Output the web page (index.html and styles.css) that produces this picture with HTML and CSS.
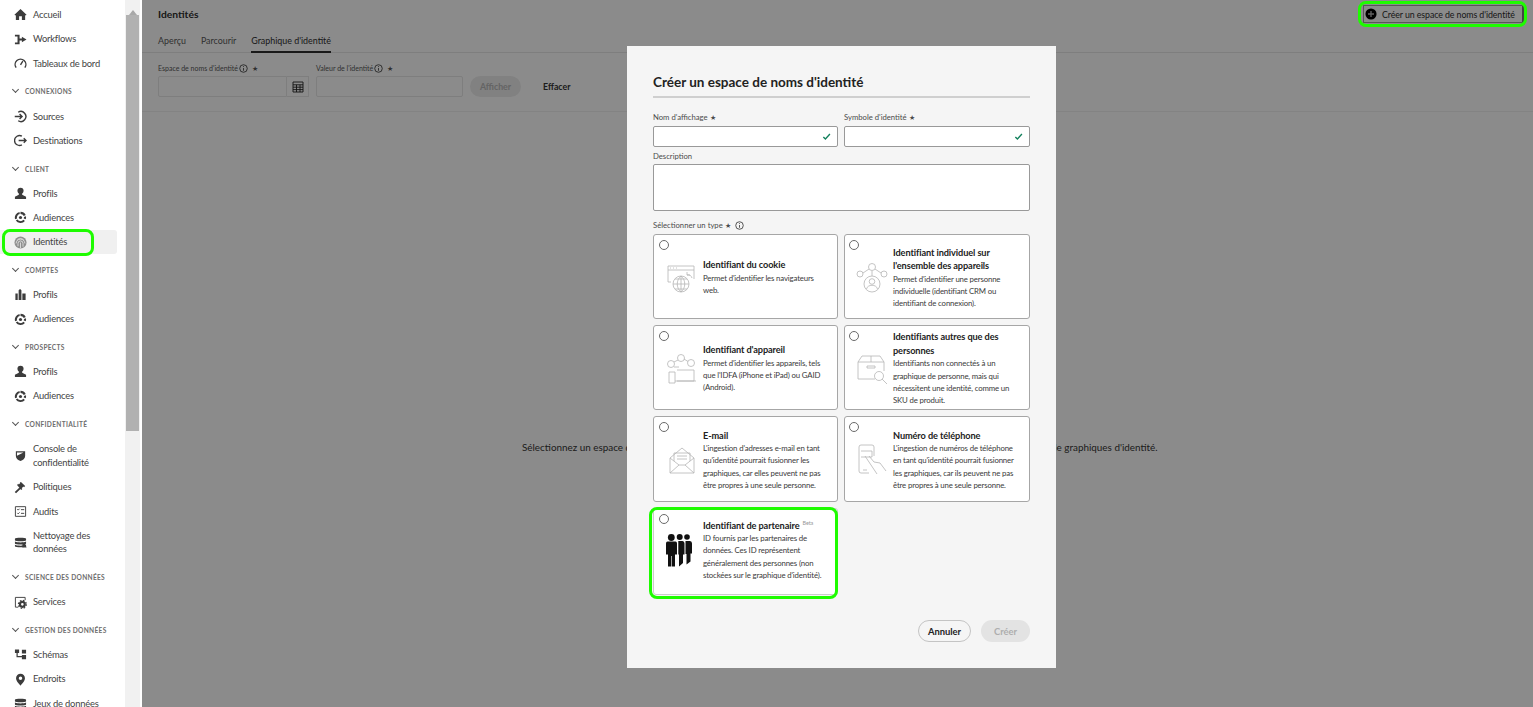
FILE: index.html
```html
<!DOCTYPE html>
<html lang="fr">
<head>
    <meta charset="UTF-8">
    <title>Identités</title>
    <link rel="stylesheet" href="styles.css">
</head>
<body>
    <svg class="defs" width="0" height="0">
        <symbol id="i-profile" viewBox="0 0 14 14"><circle cx="7" cy="4" r="3.3"/><path d="M5.2 6.500h3.600v1.900l4.200 2v2.600H1v-2.600l4.200-2z"/></symbol>
        <symbol id="i-audience" viewBox="0 0 14 14"><path d="M7 .8a6.200 6.200 0 0 1 5.600 3.500l-2.100 1A3.900 3.900 0 0 0 7 3.100zM5.900 1A6.200 6.200 0 0 0 1.200 9l2.100-.9a3.900 3.900 0 0 1 2.900-4.900zM1.900 10.200a6.200 6.200 0 0 0 9.900.7l-1.700-1.500a3.900 3.900 0 0 1-6.300-.2zM12.900 5.600a6.200 6.200 0 0 1-.3 3.300l-2.100-.9c.2-.6.2-1 .2-1.600z"/><circle cx="7" cy="7" r="1.700"/></symbol>
        <symbol id="i-db" viewBox="0 0 14 14"><path d="M1 3c0-1.400 12-1.400 12 0v1.500c0 1.400-12 1.400-12 0zM1 6c3 1.300 9 1.300 12 0v2c0 1.400-12 1.400-12 0zM1 9.500c3 1.300 9 1.300 12 0V11c0 1.400-12 1.400-12 0z"/></symbol>
    </svg>

    <aside class="sidebar">
        <nav class="nav">
            <a class="nav-item"><svg viewBox="0 0 14 14"><path d="M7 1l6.500 6.200-.9.9L12 7.600V13H8.500V9h-3v4H2V7.600l-.6.500-.9-.9z"/></svg>Accueil</a>
            <a class="nav-item"><svg viewBox="0 0 14 14"><path d="M1 2h5v3.800h2.500V4L13.500 7l-5 3V8.200H6V12H1v-1.800h2.800V3.800H1z"/></svg>Workflows</a>
            <a class="nav-item"><svg viewBox="0 0 14 14"><path class="line" d="M2.300 11.500a5.800 5.800 0 1 1 9.400 0M7 8.500l2.500-4"/></svg>Tableaux de bord</a>

            <h3 class="nav-head"><span class="chev"></span>Connexions</h3>
            <a class="nav-item"><svg viewBox="0 0 14 14"><path class="line" d="M4.500 2.400a5.400 5.400 0 1 1 0 9.200M.8 7h7.500M6 4.300L8.700 7 6 9.700"/></svg>Sources</a>
            <a class="nav-item"><svg viewBox="0 0 14 14"><path class="line" d="M8.500 2.400a5.300 5.300 0 1 0 0 9.200M5 7h8M10.500 4.500L13 7l-2.500 2.500"/></svg>Destinations</a>

            <h3 class="nav-head"><span class="chev"></span>Client</h3>
            <a class="nav-item"><svg viewBox="0 0 14 14"><use href="#i-profile"/></svg>Profils</a>
            <a class="nav-item"><svg viewBox="0 0 14 14"><use href="#i-audience"/></svg>Audiences</a>
            <a class="nav-item is-active"><svg class="finger" viewBox="0 0 14 14"><circle cx="7" cy="7" r="6.500" fill="#8f8f8f"/><path class="line thin" d="M3 5a4.800 4.800 0 0 1 8 0M2.300 8a4.700 4.700 0 0 1 9.400 0M4.300 11V8a2.700 2.700 0 0 1 5.400 0v3.500M7 7v6"/></svg>Identités</a>

            <h3 class="nav-head"><span class="chev"></span>Comptes</h3>
            <a class="nav-item"><svg viewBox="0 0 14 14"><path d="M1.500 6H4v7H1.500zM5 2.500l1.500-1.500L8 2.500V13H5zM9 6h3.500v7H9z"/></svg>Profils</a>
            <a class="nav-item"><svg viewBox="0 0 14 14"><use href="#i-audience"/></svg>Audiences</a>

            <h3 class="nav-head"><span class="chev"></span>Prospects</h3>
            <a class="nav-item"><svg viewBox="0 0 14 14"><use href="#i-profile"/></svg>Profils</a>
            <a class="nav-item"><svg viewBox="0 0 14 14"><use href="#i-audience"/></svg>Audiences</a>

            <h3 class="nav-head"><span class="chev"></span>Confidentialité</h3>
            <a class="nav-item is-double"><svg viewBox="0 0 14 14"><path fill-rule="evenodd" d="M2 2.500h10v5c0 3-2.500 4.500-5 5.500-2.500-1-5-2.500-5-5.500zM3.200 3.700v3.700l7-3.700z"/></svg><span>Console de<br>confidentialité</span></a>
            <a class="nav-item"><svg viewBox="0 0 14 14"><path d="M7.500 1l4.500 4.500-1.200 1.200-.7-.7-1.800 1.800.7.7-1.200 1.200L3.300 4.200l1.200-1.200.7.700 1.800-1.800-.7-.7zM5.600 7.200L7 8.600l-4.800 4.600-1.400-1.400z"/></svg>Politiques</a>
            <a class="nav-item"><svg viewBox="0 0 14 14"><path class="line thin" d="M1.500 1.800h11v10.400h-11zM3.500 4.500l1 1 1.500-1.500M3.500 8.500l1 1 1.500-1.500M7.500 5h3.500M7.500 9h3.500"/></svg>Audits</a>
            <a class="nav-item is-double"><svg viewBox="0 0 14 14"><use href="#i-db"/><path d="M9 9l3-1 1.500 4.500H9z"/></svg><span>Nettoyage des<br>données</span></a>

            <h3 class="nav-head"><span class="chev"></span>Science des données</h3>
            <a class="nav-item"><svg viewBox="0 0 14 14"><path class="line thin" d="M4.500 12H1.500V1.500H12V4.500"/><circle cx="9" cy="9" r="2.600" fill="none" stroke="#3c3c3c" stroke-width="2.400"/><circle cx="9" cy="9" r="4.300" fill="none" stroke="#3c3c3c" stroke-width="1.200" stroke-dasharray="1.700 1.700"/></svg>Services</a>

            <h3 class="nav-head"><span class="chev"></span>Gestion des données</h3>
            <a class="nav-item"><svg viewBox="0 0 14 14"><path d="M1 1.500h4.500v4H4v3h4.500v-1H13v4.500H8.500v-2H2.700V5.500H1zM8.500 2H13v4H8.500z"/></svg>Schémas</a>
            <a class="nav-item"><svg viewBox="0 0 14 14"><path fill-rule="evenodd" d="M7 .8a4.800 4.800 0 0 1 4.800 4.800C11.800 8.800 7 13.500 7 13.500S2.200 8.800 2.200 5.600A4.800 4.800 0 0 1 7 .8zm0 3a1.900 1.900 0 1 0 0 3.800 1.900 1.900 0 0 0 0-3.800z"/></svg>Endroits</a>
            <a class="nav-item"><svg viewBox="0 0 14 14"><use href="#i-db"/></svg>Jeux de données</a>
        </nav>
    </aside>

    <div class="scrollbar">
        <span class="scroll-arrow"></span>
        <div class="scroll-thumb"></div>
    </div>

    <main class="main">
        <header class="top">
            <div class="top-row">
                <h1>Identités</h1>
                <button class="create-btn" type="button">
                    <svg viewBox="0 0 14 14"><circle cx="7" cy="7" r="6.500"/><path d="M7 3.500v7M3.500 7h7" stroke="#aaa" stroke-width="1.600"/></svg>
                    Créer un espace de noms d'identité
                </button>
            </div>
            <div class="tabs">
                <a>Aperçu</a>
                <a>Parcourir</a>
                <a class="tab-on">Graphique d'identité</a>
            </div>
        </header>

        <section class="filters">
            <div class="field field-ns">
                <label>Espace de noms d'identité<svg class="info" viewBox="0 0 10 10"><circle cx="5" cy="5" r="4.200"/><path d="M5 4.500v3M5 2.400v1"/></svg><i>★</i></label>
                <div class="ns-box">
                    <span class="ns-input"></span>
                    <span class="ns-btn"><svg viewBox="0 0 12 12"><path d="M1 1h10v10H1zM1 3.800h10M1 6.200h10M1 8.600h10M4.500 3.800V11M8 3.800V11"/></svg></span>
                </div>
            </div>
            <div class="field field-val">
                <label>Valeur de l'identité<svg class="info" viewBox="0 0 10 10"><circle cx="5" cy="5" r="4.200"/><path d="M5 4.500v3M5 2.400v1"/></svg><i>★</i></label>
                <span class="val-input"></span>
            </div>
            <button class="show-btn" type="button">Afficher</button>
            <button class="clear-btn" type="button">Effacer</button>
        </section>

        <p class="empty">Sélectionnez un espace de noms d'identité et saisissez une valeur d'identité pour commencer à afficher toutes les données de graphiques d'identité.</p>

        <div class="scrim">
            <span class="ring-create"></span>
            <div class="modal">
                <h2>Créer un espace de noms d'identité</h2>
                <div class="form-two">
                    <div>
                        <label>Nom d'affichage <i>★</i></label>
                        <div class="input"><svg viewBox="0 0 10 10"><path d="M1.500 5.500l2.300 2.300 5-5.500"/></svg></div>
                    </div>
                    <div>
                        <label>Symbole d'identité <i>★</i></label>
                        <div class="input"><svg viewBox="0 0 10 10"><path d="M1.500 5.500l2.300 2.300 5-5.500"/></svg></div>
                    </div>
                </div>
                <label class="label-desc">Description</label>
                <div class="textarea"></div>
                <label class="label-type">Sélectionner un type <i>★</i><svg class="info" viewBox="0 0 10 10"><circle cx="5" cy="5" r="4.200"/><path d="M5 4.500v3M5 2.400v1"/></svg></label>

                <div class="cards">
                    <div class="card">
                        <span class="radio"></span>
                        <svg class="card-icon" viewBox="0 0 32 32"><path d="M5 20H2V4h26v13M2 8h26M4 6h1M7 6h1M10 6h1M21 13a4 4 0 0 1 5 3M21 10v3h3"/><circle cx="15" cy="22" r="8"/><path d="M7 22h16M15 14v16M9 17h12M9 27h12M15 14c-5 4-5 12 0 16M15 14c5 4 5 12 0 16"/></svg>
                        <div class="card-text"><h4>Identifiant du cookie</h4><p>Permet d'identifier les navigateurs<br>web.</p></div>
                    </div>
                    <div class="card card-b">
                        <span class="radio"></span>
                        <svg class="card-icon" viewBox="0 0 32 32"><circle cx="16" cy="5" r="3.500"/><circle cx="4" cy="12" r="3"/><circle cx="28" cy="12" r="3"/><path d="M7 11l6-4M19 7l6 4M16 9v5"/><circle cx="16" cy="22" r="8"/><circle cx="16" cy="19.500" r="2.800"/><path d="M10.500 27c1-5 10-5 11 0"/></svg>
                        <div class="card-text"><h4>Identifiant individuel sur<br>l'ensemble des appareils</h4><p>Permet d'identifier une personne<br>individuelle (identifiant CRM ou<br>identifiant de connexion).</p></div>
                    </div>
                    <div class="card">
                        <span class="radio"></span>
                        <svg class="card-icon" viewBox="0 0 32 32"><circle cx="15" cy="5" r="3.500"/><circle cx="5" cy="11" r="3.500"/><circle cx="25" cy="10" r="3.500"/><path d="M8 9l4-2M18 6l4 2.500M8 14h5M3 19h6v11H3zM11 17h17v11H11M9 28h21"/></svg>
                        <div class="card-text"><h4>Identifiant d'appareil</h4><p>Permet d'identifier les appareils, tels<br>que l'IDFA (iPhone et iPad) ou GAID<br>(Android).</p></div>
                    </div>
                    <div class="card card-b">
                        <span class="radio"></span>
                        <svg class="card-icon" viewBox="0 0 32 32"><path d="M2 9l4-6h18l4 6M2 9h26M2 9v17h17M28 9v9M15 3v6M11 13h8v2h-8z"/><circle cx="23" cy="23" r="4.500"/><path d="M26 26l5 5"/></svg>
                        <div class="card-text"><h4>Identifiants autres que des<br>personnes</h4><p>Identifiants non connectés à un<br>graphique de personne, mais qui<br>nécessitent une identité, comme un<br>SKU de produit.</p></div>
                    </div>
                    <div class="card">
                        <span class="radio"></span>
                        <svg class="card-icon" viewBox="0 0 32 32"><path d="M4 14l12-10 12 10v15H4zM4 29l9-8h6l9 8M4 14l9 7M28 14l-9 7M8 17V9h16v8M11 12h10M11 15h10"/></svg>
                        <div class="card-text"><h4>E-mail</h4><p>L'ingestion d'adresses e-mail en tant<br>qu'identité pourrait fusionner les<br>graphiques, car elles peuvent ne pas<br>être propres à une seule personne.</p></div>
                    </div>
                    <div class="card card-b">
                        <span class="radio"></span>
                        <svg class="card-icon" viewBox="0 0 32 32"><path d="M13 29H5a2 2 0 0 1-2-2V3a2 2 0 0 1 2-2h11a2 2 0 0 1 2 2v9M7 26h4M5 7h11v6H5M9 12l8 12 4 6M13 12l5 6 6 1 6 8"/></svg>
                        <div class="card-text"><h4>Numéro de téléphone</h4><p>L'ingestion de numéros de téléphone<br>en tant qu'identité pourrait fusionner<br>les graphiques, car ils peuvent ne pas<br>être propres à une seule personne.</p></div>
                    </div>
                    <div class="card card-partner">
                        <span class="radio"></span>
                        <svg class="card-icon icon-solid" viewBox="0 0 26 33"><circle cx="5.300" cy="3.500" r="3.400"/><circle cx="13.700" cy="3" r="3"/><circle cx="21" cy="3" r="2.800"/><path d="M1.500 7.500H9.500q1.500 0 1.500 2v11H9v12H5.800V22H5.200v10.500H2V20.500H0v-11q0-2 1.500-2zM12.300 7h4.200q2 0 2 2.500v11H17v8.500L13 32.500V20.500h-.7zM19.500 7h4.500q2 0 2 2.500v10h-1.500v8l-4 3V20h-1z"/></svg>
                        <div class="card-text"><h4>Identifiant de partenaire<sup>Beta</sup></h4><p>ID fournis par les partenaires de<br>données. Ces ID représentent<br>généralement des personnes (non<br>stockées sur le graphique d'identité).</p></div>
                    </div>
                </div>

                <div class="modal-actions">
                    <button class="btn-cancel" type="button">Annuler</button>
                    <button class="btn-create" type="button">Créer</button>
                </div>
            </div>
        </div>
    </main>
</body>
</html>
```
FILE: styles.css
```css
*, *::after {
    box-sizing: border-box;
}
html, body {
    margin: 0;
    height: 707px;
    overflow: hidden;
}
body {
    display: flex;
    font-family: Lato, "Noto Sans", sans-serif;
    font-size: 10px;
    color: #2c2c2c;
    background: #fff;
}
.defs {
    position: absolute;
}
h1, h2, h3, h4, p {
    margin: 0;
}
button {
    font-family: inherit;
}

/* sidebar */
.sidebar {
    width: 125px;
    flex: none;
    background: #fff;
    overflow: hidden;
}
.nav {
    padding-top: 2.800px;
}
.nav-item {
    position: relative;
    display: flex;
    align-items: center;
    gap: 6px;
    height: 24.300px;
    padding-left: 14px;
    color: #444;
    font-size: 9.400px;
    letter-spacing: -.2px;
    line-height: 13.500px;
}
.nav-item svg {
    width: 13px;
    height: 13px;
    flex: none;
    fill: #3c3c3c;
}
.nav-item svg .line, .finger .line {
    fill: none;
    stroke: #3c3c3c;
    stroke-width: 1.500;
}
.finger .line.thin {
    stroke: #ddd;
    stroke-width: .8;
}
.nav-item svg .line.thin {
    stroke-width: 1;
}
.nav-item.is-double {
    height: 38px;
}
.nav-item.is-active {
    width: 117px;
    background: #f0f0f0;
    border-radius: 0 3px 3px 0;
}
.nav-item.is-active::after {
    content: "";
    position: absolute;
    left: 2px;
    top: -1px;
    width: 92px;
    height: 27px;
    border: 3px solid #1efc00;
    border-radius: 8px;
}
.nav-head {
    display: flex;
    align-items: center;
    height: 28.500px;
    padding: 3px 0 0 11px;
    font-size: 6.600px;
    font-weight: 700;
    letter-spacing: .3px;
    text-transform: uppercase;
    color: #6e6e6e;
}
.chev {
    width: 5px;
    height: 5px;
    margin: -3px 7px 0 2px;
    border-right: 1.200px solid #555;
    border-bottom: 1.200px solid #555;
    transform: rotate(45deg);
}

/* scrollbar of the sidebar */
.scrollbar {
    width: 17px;
    flex: none;
    padding: 0 3px 0 1px;
    background: linear-gradient(to right, #f1f1f1 15px, #fff 15px);
}
.scroll-arrow {
    display: block;
    width: 0;
    height: 15px;
    margin: 0 auto;
    padding-top: 5px;
    border-left: 4px solid transparent;
    border-right: 4px solid transparent;
    border-bottom: 5px solid #a8a8a8;
    background-clip: padding-box;
}
.scroll-thumb {
    height: 416px;
    background: #b1b1b1;
}

/* main area */
.main {
    position: relative;
    flex: 1;
    background: #f5f5f5;
}
.top {
    height: 53px;
    border-bottom: 1px solid #ddd;
    padding-left: 16px;
}
.top-row {
    display: flex;
    justify-content: space-between;
    align-items: center;
    height: 28px;
}
.top-row h1 {
    font-size: 10.300px;
    font-weight: 700;
}
.create-btn {
    display: flex;
    align-items: center;
    gap: 5px;
    width: 161px;
    height: 18px;
    margin: 0 9px 0 0;
    padding: 0 0 0 1px;
    border: 1px solid #999;
    border-right: 2px solid #777;
    background: #f5f5f5;
    font-size: 8.800px;
    letter-spacing: -.08px;
    white-space: nowrap;
    color: #2c2c2c;
}
.create-btn svg {
    width: 12px;
    height: 12px;
    flex: none;
}
.tabs {
    display: flex;
    gap: 15px;
    height: 25px;
    font-size: 8.900px;
    color: #555;
}
.tabs a {
    padding-top: 7px;
}
.tabs .tab-on {
    color: #2c2c2c;
    border-bottom: 2px solid #2c2c2c;
}

.filters {
    display: flex;
    align-items: flex-end;
    height: 59px;
    padding-left: 16px;
    border-bottom: 1px solid #e6e6e6;
    padding-bottom: 14px;
}
.filters label {
    display: flex;
    align-items: center;
    height: 14px;
    margin-bottom: 1px;
    font-size: 7px;
    color: #555;
}
.filters label i, label i {
    font-style: normal;
    font-size: 7px;
    margin-left: 4px;
}
.info {
    width: 9px;
    height: 9px;
    margin-left: 1px;
    fill: none;
    stroke: #333;
    stroke-width: .9;
}
.ns-box {
    display: flex;
    width: 151px;
    height: 21px;
}
.ns-input, .val-input {
    display: block;
    height: 21px;
    border: 1px solid #ddd;
    border-radius: 2px;
    background: #f5f5f5;
}
.ns-input {
    width: 129px;
    border-radius: 2px 0 0 2px;
}
.ns-btn {
    display: flex;
    align-items: center;
    justify-content: center;
    width: 22px;
    border: 1px solid #ddd;
    border-left: 0;
}
.ns-btn svg {
    width: 12px;
    height: 12px;
    fill: none;
    stroke: #222;
    stroke-width: .9;
}
.field-val {
    margin-left: 7px;
}
.val-input {
    width: 147px;
}
.show-btn {
    width: 51px;
    height: 21px;
    margin-left: 7px;
    border: 0;
    border-radius: 11px;
    background: #e3e3e3;
    color: #b0b0b0;
    font-size: 8.800px;
    font-weight: 700;
}
.clear-btn {
    margin-left: 22px;
    height: 21px;
    padding: 0;
    border: 0;
    background: none;
    color: #333;
    font-size: 8.800px;
    font-weight: 700;
}
.empty {
    margin: 328px 0 0 380px;
    font-size: 9.900px;
    line-height: 14px;
    color: #333;
    white-space: nowrap;
}

/* modal */
.scrim {
    position: absolute;
    inset: 0;
    background: rgba(0, 0, 0, .43);
}
.ring-create {
    position: absolute;
    left: 1216px;
    top: 1px;
    width: 169px;
    height: 26px;
    border: 3px solid #1efc00;
    border-radius: 8px;
}
.modal {
    position: absolute;
    left: 485px;
    top: 46px;
    width: 429px;
    height: 622px;
    padding: 28px 26px 0;
    background: #f5f5f5;
}
.modal h2 {
    height: 24px;
    font-size: 13.500px;
    line-height: 16px;
    font-weight: 700;
    color: #222;
    border-bottom: 2px solid #cfcfcf;
}
.modal label {
    display: block;
    height: 12px;
    font-size: 7.700px;
    line-height: 12px;
    color: #4b4b4b;
}
.modal label i {
    margin-left: 0;
}
.form-two {
    display: grid;
    grid-template-columns: 185px 186px;
    gap: 6px;
    margin-top: 13px;
}
.form-two label {
    margin-bottom: 3px;
}
.input {
    display: flex;
    align-items: center;
    justify-content: flex-end;
    height: 21px;
    padding-right: 6px;
    background: #fff;
    border: 1px solid #999;
    border-radius: 2px;
}
.input svg {
    width: 9px;
    height: 9px;
    fill: none;
    stroke: #12805c;
    stroke-width: 1.500;
}
.label-desc {
    margin-top: 3px;
}
.textarea {
    height: 47px;
    margin-top: 2px;
    background: #fff;
    border: 1px solid #999;
    border-radius: 2px;
}
.modal .label-type {
    display: flex;
    align-items: center;
    margin-top: 8px;
}
.modal .label-type i {
    margin-left: 2px;
}
.label-type .info {
    margin-left: 4px;
}
.cards {
    display: grid;
    grid-template-columns: 185px 186px;
    grid-template-rows: 85px 85px 86px 87px;
    gap: 6px;
    margin-top: 3px;
}
.card {
    position: relative;
    display: flex;
    align-items: center;
    padding: 2px 0 0 12px;
    background: #fff;
    border: 1px solid #a6a6a6;
    border-radius: 3px;
}
.card-b {
    padding-left: 11px;
}
.radio {
    position: absolute;
    left: 5px;
    top: 5px;
    width: 10px;
    height: 10px;
    border: 1.200px solid #6a6a6a;
    border-radius: 50%;
    background: #fff;
}
.card-b .radio {
    left: 4px;
}
.card-icon {
    flex: none;
    width: 32px;
    height: 32px;
    margin-right: 5px;
    fill: none;
    stroke: #b5b5b5;
    stroke-width: .8;
}
.card-icon.icon-solid {
    width: 26px;
    height: 33px;
    margin-right: 11px;
    fill: #111;
    stroke: none;
}
.card-text h4 {
    font-size: 9.200px;
    line-height: 13.500px;
    letter-spacing: -.1px;
    font-weight: 700;
    color: #222;
}
.card-text p {
    font-size: 7.800px;
    line-height: 12.300px;
    letter-spacing: -.15px;
    color: #3a3a3a;
    white-space: nowrap;
}
.card-text sup {
    margin-left: 3px;
    font-size: 5.500px;
    line-height: 0;
    font-weight: 400;
    color: #999;
}
.card-partner {
    padding: 0 0 3px 12px;
    border-color: #ccc;
}
.card-partner::after {
    content: "";
    position: absolute;
    left: -5px;
    top: -2px;
    right: -1px;
    bottom: -5px;
    border: 3px solid #1efc00;
    border-radius: 8px;
}
.modal-actions {
    display: flex;
    justify-content: flex-end;
    gap: 10px;
    margin-top: 25px;
}
.modal-actions button {
    height: 22px;
    border-radius: 11px;
    font-size: 9.400px;
    font-weight: 700;
    padding: 0;
}
.btn-cancel {
    width: 53px;
    border: 1px solid #c4c4c4;
    background: #f5f5f5;
    color: #222;
}
.btn-create {
    width: 49px;
    border: 0;
    background: #e3e3e3;
    color: #aeaeae;
}
```
